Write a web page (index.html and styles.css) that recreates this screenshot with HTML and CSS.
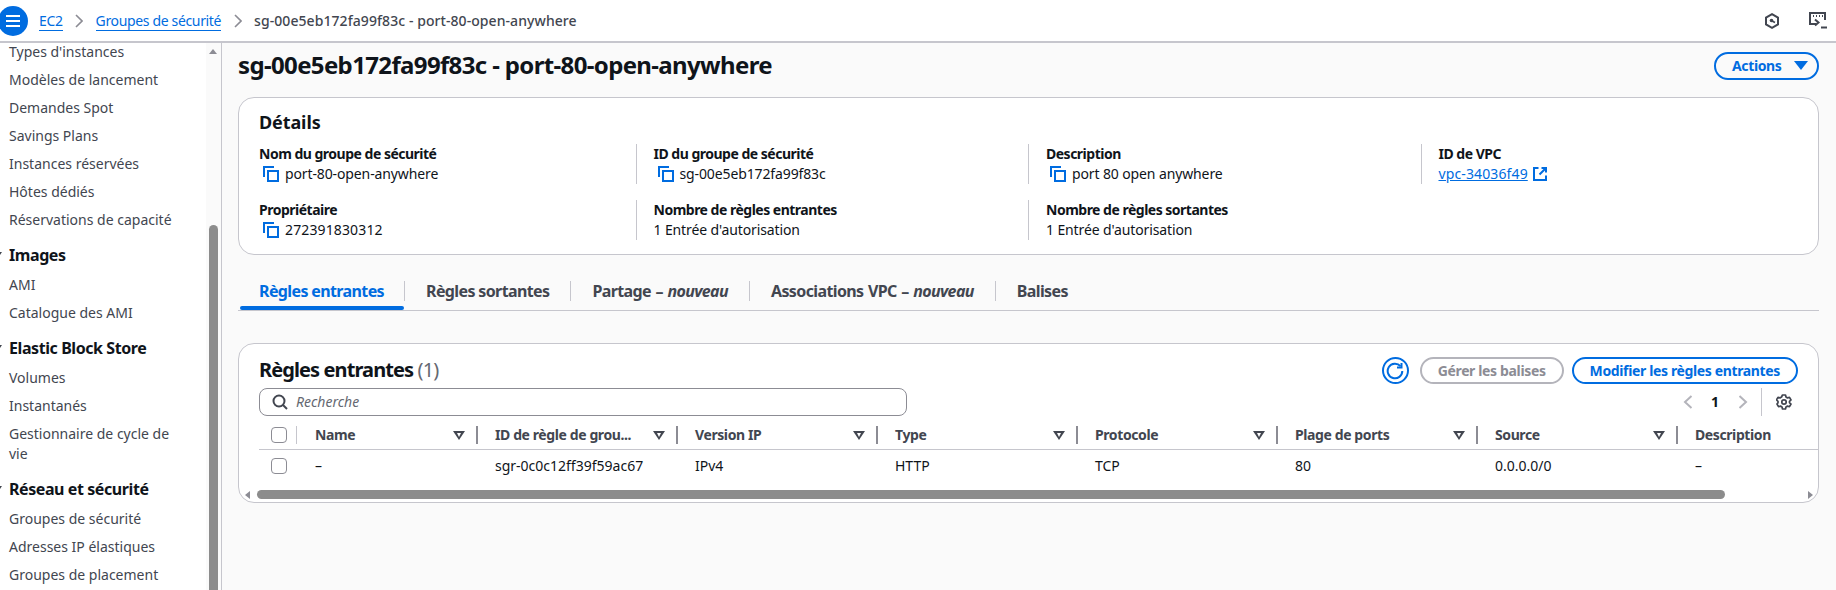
FILE: index.html
```html
<!DOCTYPE html>
<html lang="fr">
<head>
<meta charset="utf-8">
<title>Groupes de sécurité</title>
<link rel="stylesheet" href="styles.css">
</head>
<body>
<div class="app">
  <header class="topbar">
    <button class="menu-btn" aria-label="Menu"><svg width="14" height="12" viewBox="0 0 14 12"><path d="M0 1h14M0 6h14M0 11h14" stroke="#fff" stroke-width="2"/></svg></button>
    <nav class="crumbs">
      <a href="#">EC2</a>
      <svg class="chev" width="8" height="14" viewBox="0 0 8 14"><path d="M1 1l6 6-6 6" fill="none" stroke="#8c8c94" stroke-width="1.6"/></svg>
      <a href="#">Groupes de sécurité</a>
      <svg class="chev" width="8" height="14" viewBox="0 0 8 14"><path d="M1 1l6 6-6 6" fill="none" stroke="#8c8c94" stroke-width="1.6"/></svg>
      <span class="crumb-current">sg-00e5eb172fa99f83c - port-80-open-anywhere</span>
    </nav>
    <div class="top-icons">
      <svg width="16" height="16" viewBox="0 0 16 16"><path d="M8 1.2l6 3.4v6.8l-6 3.4-6-3.4V4.600z" fill="none" stroke="#424650" stroke-width="2"/><circle cx="7.500" cy="7.500" r="1.800" fill="#424650"/><path d="M8 8l3 1.500" stroke="#424650" stroke-width="1.600"/></svg>
      <svg width="18" height="17" viewBox="0 0 18 17"><path d="M7 12H1V1h15v7" fill="none" stroke="#424650" stroke-width="2"/><path d="M4 4h1M7 4h1M10 4h1M13 4h1" stroke="#424650" stroke-width="2"/><path d="M6 7.500l3.500 3-3.500 3" fill="none" stroke="#424650" stroke-width="2"/><path d="M12 15.500h6" stroke="#424650" stroke-width="2"/></svg>
    </div>
  </header>
  <div class="layout">
    <aside class="sidebar">
      <ul class="side-list">
        <li>Types d'instances</li>
        <li>Modèles de lancement</li>
        <li>Demandes Spot</li>
        <li>Savings Plans</li>
        <li>Instances réservées</li>
        <li>Hôtes dédiés</li>
        <li>Réservations de capacité</li>
        <li class="side-head">Images</li>
        <li>AMI</li>
        <li>Catalogue des AMI</li>
        <li class="side-head">Elastic Block Store</li>
        <li>Volumes</li>
        <li>Instantanés</li>
        <li>Gestionnaire de cycle de vie</li>
        <li class="side-head">Réseau et sécurité</li>
        <li>Groupes de sécurité</li>
        <li>Adresses IP élastiques</li>
        <li>Groupes de placement</li>
      </ul>
      <div class="side-scroll">
        <span class="up-arrow"></span>
        <span class="side-thumb"></span>
      </div>
    </aside>
    <main class="content">
      <div class="title-row">
        <h1>sg-00e5eb172fa99f83c - port-80-open-anywhere</h1>
        <button class="btn btn-actions">Actions <svg class="caret" width="14" height="9" viewBox="0 0 14 9"><path d="M0 0h14L7 9z" fill="#006ce0"/></svg></button>
      </div>

      <section class="card details">
        <h2>Détails</h2>
        <div class="detail-grid">
          <div class="field first">
            <div class="label">Nom du groupe de sécurité</div>
            <div class="value copy"><svg class="copy-ic" width="16" height="16" viewBox="0 0 16 16"><path d="M1 11V1h10" fill="none" stroke="#006ce0" stroke-width="2"/><rect x="5" y="5" width="10" height="10" fill="none" stroke="#006ce0" stroke-width="2"/></svg>port-80-open-anywhere</div>
          </div>
          <div class="field">
            <div class="label">ID du groupe de sécurité</div>
            <div class="value copy"><svg class="copy-ic" width="16" height="16" viewBox="0 0 16 16"><path d="M1 11V1h10" fill="none" stroke="#006ce0" stroke-width="2"/><rect x="5" y="5" width="10" height="10" fill="none" stroke="#006ce0" stroke-width="2"/></svg>sg-00e5eb172fa99f83c</div>
          </div>
          <div class="field">
            <div class="label">Description</div>
            <div class="value copy"><svg class="copy-ic" width="16" height="16" viewBox="0 0 16 16"><path d="M1 11V1h10" fill="none" stroke="#006ce0" stroke-width="2"/><rect x="5" y="5" width="10" height="10" fill="none" stroke="#006ce0" stroke-width="2"/></svg>port 80 open anywhere</div>
          </div>
          <div class="field">
            <div class="label">ID de VPC</div>
            <div class="value"><a href="#" class="vpc-link">vpc-34036f49</a><svg class="ext-ic" width="14" height="14" viewBox="0 0 14 14"><path d="M5.500 1H1v12h12V8.500" fill="none" stroke="#006ce0" stroke-width="2"/><path d="M8.500 1H13v4.500M13 1L6.500 7.500" fill="none" stroke="#006ce0" stroke-width="2"/></svg></div>
          </div>
          <div class="field first">
            <div class="label">Propriétaire</div>
            <div class="value copy"><svg class="copy-ic" width="16" height="16" viewBox="0 0 16 16"><path d="M1 11V1h10" fill="none" stroke="#006ce0" stroke-width="2"/><rect x="5" y="5" width="10" height="10" fill="none" stroke="#006ce0" stroke-width="2"/></svg><span class="digits">272391830312</span></div>
          </div>
          <div class="field">
            <div class="label">Nombre de règles entrantes</div>
            <div class="value">1 Entrée d'autorisation</div>
          </div>
          <div class="field">
            <div class="label">Nombre de règles sortantes</div>
            <div class="value">1 Entrée d'autorisation</div>
          </div>
        </div>
      </section>

      <div class="tabs">
        <div class="tab active">Règles entrantes</div>
        <div class="tab">Règles sortantes</div>
        <div class="tab tab-new">Partage – <em>nouveau</em></div>
        <div class="tab tab-new">Associations VPC – <em>nouveau</em></div>
        <div class="tab last">Balises</div>
      </div>

      <section class="card rules">
        <div class="rules-head">
          <h2>Règles entrantes <span class="count">(1)</span></h2>
          <div class="rules-actions">
            <button class="refresh" aria-label="Actualiser"><svg width="18" height="18" viewBox="0 0 18 18"><path d="M14.500 4.200A7.300 7.300 0 1 0 16.300 9" fill="none" stroke="#006ce0" stroke-width="2"/><path d="M15.500 1v4.500H11" fill="none" stroke="#006ce0" stroke-width="2"/></svg></button>
            <button class="btn btn-disabled">Gérer les balises</button>
            <button class="btn btn-primary-line">Modifier les règles entrantes</button>
          </div>
        </div>
        <div class="tools">
          <div class="search">
            <svg width="16" height="16" viewBox="0 0 16 16"><circle cx="7" cy="7" r="5.500" fill="none" stroke="#424650" stroke-width="2"/><path d="M11 11l4 4" stroke="#424650" stroke-width="2"/></svg>
            <span class="placeholder">Recherche</span>
          </div>
          <div class="pager">
            <svg width="10" height="16" viewBox="0 0 10 16"><path d="M8.500 2L2 8l6.500 6" fill="none" stroke="#b4b4bb" stroke-width="2"/></svg>
            <span class="page-num">1</span>
            <svg width="10" height="16" viewBox="0 0 10 16"><path d="M1.500 2L8 8l-6.500 6" fill="none" stroke="#b4b4bb" stroke-width="2"/></svg>
            <span class="pager-div"></span>
            <svg class="gear" width="16" height="16" viewBox="0 0 16 16"><path d="M6.500 1h3l.5 2 1.500.9 2-.6 1.500 2.600-1.500 1.400v1.400l1.500 1.400-1.500 2.600-2-.6-1.500.9-.5 2h-3l-.5-2-1.500-.9-2 .6-1.500-2.600L2 8.700V7.300L.5 5.900 2 3.300l2 .6L5.500 3z" fill="none" stroke="#424650" stroke-width="1.700" stroke-linejoin="round"/><circle cx="8" cy="8" r="2.200" fill="none" stroke="#424650" stroke-width="1.700"/></svg>
          </div>
        </div>
        <div class="table">
          <div class="t-row t-head">
            <div class="cell check-cell"><span class="checkbox"></span></div>
            <div class="cell"><span class="th">Name</span><span class="sort"></span></div>
            <div class="cell"><span class="th">ID de règle de grou...</span><span class="sort"></span></div>
            <div class="cell"><span class="th">Version IP</span><span class="sort"></span></div>
            <div class="cell"><span class="th">Type</span><span class="sort"></span></div>
            <div class="cell"><span class="th">Protocole</span><span class="sort"></span></div>
            <div class="cell"><span class="th">Plage de ports</span><span class="sort"></span></div>
            <div class="cell"><span class="th">Source</span><span class="sort"></span></div>
            <div class="cell no-div"><span class="th">Description</span></div>
          </div>
          <div class="t-row t-body">
            <div class="cell check-cell"><span class="checkbox"></span></div>
            <div class="cell">–</div>
            <div class="cell">sgr-0c0c12ff39f59ac67</div>
            <div class="cell">IPv4</div>
            <div class="cell">HTTP</div>
            <div class="cell">TCP</div>
            <div class="cell">80</div>
            <div class="cell">0.0.0.0/0</div>
            <div class="cell">–</div>
          </div>
        </div>
        <div class="hscroll">
          <span class="arrow-left"></span>
          <span class="hthumb"></span>
          <span class="arrow-right"></span>
        </div>
      </section>
    </main>
  </div>
</div>
</body>
</html>
```
FILE: styles.css
```css
* { box-sizing: border-box; }
html, body { margin: 0; height: 100%; overflow: hidden; }
body { font-family: "Noto Sans", sans-serif; font-size: 14px; line-height: 20px; color: #0f141a; background: #fafafa; }
h1, h2, ul { margin: 0; padding: 0; }
button { font-family: inherit; cursor: pointer; }

.app { display: flex; flex-direction: column; height: 590px; }

.topbar { flex: none; height: 43px; display: flex; align-items: center; background: #fff; border-bottom: 2px solid #c6c6cd; padding-right: 9px; }
.menu-btn { flex: none; width: 30px; height: 30px; margin-left: -2px; padding: 0; border: 0; border-radius: 50%; background: #006ce0; display: flex; align-items: center; justify-content: center; }
.crumbs { display: flex; align-items: center; margin-left: 11px; font-size: 14px; }
.crumbs a { color: #006ce0; text-decoration: none; border-bottom: 1px solid #006ce0; line-height: 19px; letter-spacing: -0.35px; }
.chev { margin: 0 12.500px; }
.crumb-current { color: #424650; font-weight: 500; letter-spacing: 0.07px; }
.top-icons { margin-left: auto; display: flex; align-items: center; gap: 29px; }

.layout { flex: 1; display: flex; min-height: 0; }

.sidebar { flex: none; width: 222px; background: #fff; border-right: 1px solid #c6c6cd; overflow: hidden; position: relative; }
.side-list { list-style: none; margin-top: -1px; padding: 0 45px 0 9px; color: #424650; }
.side-list li { padding: 4px 0; }
.side-list li:first-child { padding-top: 0; }
.side-list .side-head { position: relative; padding: 11px 0 6px; font-size: 16px; font-weight: 700; letter-spacing: -0.42px; color: #0f141a; }
.side-list .side-head::before { content: ""; position: absolute; left: -15px; top: 18px; border: 4px solid transparent; border-top: 6px solid #424650; }
.side-scroll { position: absolute; top: 0; right: 0; bottom: 0; width: 15px; background: #fafafa; }
.up-arrow { position: absolute; left: 3px; top: 6px; border: 4px solid transparent; border-top: 0; border-bottom: 5px solid #8c8c94; }
.side-thumb { position: absolute; left: 3px; top: 182px; bottom: 0; width: 9px; border-radius: 5px 5px 0 0; background: #8c8c8c; }

.content { flex: 1; min-width: 0; padding: 0 17px 0 16px; }

.title-row { height: 54px; display: flex; align-items: center; justify-content: space-between; padding-bottom: 9px; }
h1 { font-size: 24px; line-height: 30px; font-weight: 700; letter-spacing: -0.64px; margin-top: -2px; }
.btn { height: 28px; border-radius: 20px; border: 2px solid #006ce0; background: transparent; color: #006ce0; font-size: 14px; font-weight: 700; letter-spacing: -0.36px; padding: 0 16px; display: inline-flex; align-items: center; white-space: nowrap; }
.btn-actions { gap: 12px; padding: 0 14px 0 16px; width: 105px; }
.caret { flex: none; }
.btn-disabled { border-color: #b4b4bb; color: #8c8c94; }
.btn-primary-line { background: transparent; }

.card { background: #fff; border: 1px solid #c6c6cd; border-radius: 16px; overflow: hidden; }

.details { height: 158px; padding-top: 12px; }
.details h2 { font-size: 18px; line-height: 24px; font-weight: 700; letter-spacing: -0.1px; padding-left: 20px; margin-bottom: 10px; }
.detail-grid { display: grid; grid-template-columns: 376.500px repeat(3, 392.500px); row-gap: 16px; padding-left: 20px; }
.field { height: 40px; padding-left: 17px; border-left: 1px solid #c6c6cd; }
.field.first { padding-left: 0; border-left: 0; }
.label { font-weight: 700; letter-spacing: -0.5px; line-height: 20px; }
.value { display: flex; align-items: center; height: 20px; color: #0f141a; letter-spacing: -0.12px; }
.digits { letter-spacing: 0.13px; }
.copy-ic { margin: 0 6px 0 4px; flex: none; }
.vpc-link { color: #006ce0; letter-spacing: 0.12px; }
.ext-ic { margin-left: 5px; }

.tabs { margin-top: 26px; height: 30px; display: flex; align-items: flex-start; border-bottom: 1px solid #c6c6cd; }
.tab { position: relative; height: 20px; padding: 0 21px; border-right: 1px solid #c6c6cd; font-size: 16px; font-weight: 700; letter-spacing: -0.62px; color: #424650; white-space: nowrap; }
.tab em { font-size: 16px; }
.tab-new { word-spacing: 1px; }
.tab.last { border-right: 0; }
.tab.active { color: #006ce0; padding-right: 20px; }
.tab.active::after { content: ""; position: absolute; left: 2px; right: 0; top: 25px; height: 4px; border-radius: 2px; background: #006ce0; }

.rules { height: 160px; margin-top: 32px; position: relative; }
.rules-head { display: flex; align-items: center; justify-content: space-between; padding: 13px 20px 0 20px; height: 40px; }
.rules-head h2 { font-size: 20px; line-height: 27px; font-weight: 700; letter-spacing: -0.9px; margin-top: -2px; }
.count { font-weight: 400; color: #656871; }
.rules-actions { display: flex; align-items: center; gap: 8px; }
.rules-actions .btn { height: 27px; padding: 0 16px; }
.refresh { width: 27px; height: 27px; margin-right: 3px; padding: 0; border: 2px solid #006ce0; border-radius: 50%; background: transparent; display: flex; align-items: center; justify-content: center; }

.tools { display: flex; justify-content: space-between; height: 32px; padding: 4px 26px 0 20px; align-items: flex-start; }
.search { width: 648px; height: 28px; display: flex; align-items: center; gap: 8px; padding-left: 12px; border: 1px solid #8c8c94; border-radius: 8px; background: #fff; }
.placeholder { font-style: italic; color: #656871; font-size: 14px; }
.pager { display: flex; align-items: center; height: 28px; }
.page-num { font-weight: 700; margin: 0 19px 0 18px; }
.pager-div { width: 1px; height: 28px; background: #c6c6cd; margin: 0 14px 0 13px; }

.table { margin-left: 20px; overflow: hidden; }
.t-row { display: grid; grid-template-columns: 38px 180px repeat(7, 200px); width: 1600px; height: 31px; }
.t-head { border-bottom: 1px solid #c6c6cd; color: #424650; font-weight: 700; letter-spacing: -0.4px; height: 34px; }
.t-head .cell { padding-top: 5px; }
.cell { display: flex; align-items: center; padding-left: 18px; white-space: nowrap; position: relative; }
.t-head .cell::after { content: ""; position: absolute; right: -1px; top: 10px; height: 18px; width: 2px; background: #8c8c94; }
.t-head .no-div::after { display: none; }
.t-head .check-cell::after { right: 0; width: 1px; background: #c6c6cd; }
.cell.check-cell { padding-left: 12px; }
.sort { position: absolute; right: 12px; top: 15px; width: 0; height: 0; border-left: 6px solid transparent; border-right: 6px solid transparent; border-top: 9px solid #424650; }
.sort::after { content: ""; position: absolute; left: -2.500px; top: -7.500px; border-left: 2.500px solid transparent; border-right: 2.500px solid transparent; border-top: 4px solid #fff; }
.checkbox { display: block; width: 16px; height: 16px; border: 1px solid #8c8c94; border-radius: 4px; background: #fff; }

.hscroll { display: flex; align-items: center; height: 21px; padding: 6px 5px 0 6px; }
.arrow-left { width: 0; height: 0; border: 4px solid transparent; border-left: 0; border-right: 5px solid #8c8c94; }
.hthumb { width: 1468px; height: 9px; margin-left: 7px; border-radius: 5px; background: #8c8c8c; }
.arrow-right { margin-left: auto; width: 0; height: 0; border: 4px solid transparent; border-right: 0; border-left: 5px solid #8c8c94; }
```
